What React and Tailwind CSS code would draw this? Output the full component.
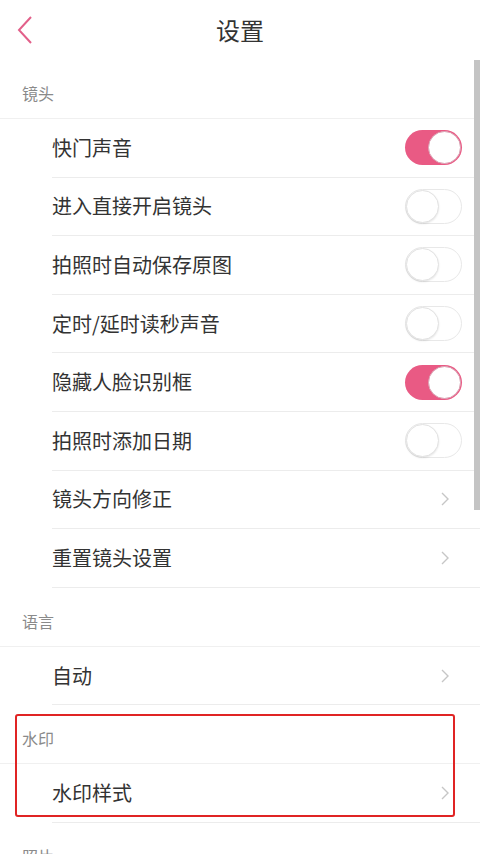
import React from 'react'

const font = { fontFamily: '"Noto Sans CJK SC", "Noto Sans", sans-serif' }

function Toggle({ on }) {
  return on ? (
    <div className="w-[57px] h-[35px] rounded-full bg-[#e95a84] flex items-center justify-end p-[1px]">
      <div className="w-[33px] h-[33px] rounded-full bg-white border border-[#d9a3b4]" />
    </div>
  ) : (
    <div className="w-[57px] h-[35px] rounded-full bg-white border border-[#e8e8e8] flex items-center justify-start">
      <div className="w-[33px] h-[33px] rounded-full bg-white border border-[#e2e2e2] shadow-[0_1px_2px_rgba(0,0,0,0.1)]" />
    </div>
  )
}

function Chevron() {
  return (
    <svg width="10" height="16" viewBox="0 0 10 16" className="mr-[30px]">
      <polyline points="2,2 8,8 2,14" fill="none" stroke="#c6c6c6" strokeWidth="1.4" />
    </svg>
  )
}

function Row({ label, toggle, on }) {
  return (
    <div className="h-[58.6px] pl-[52px]">
      <div className="h-full flex items-center justify-between border-b border-[#ececec]">
        <span className="text-[20px] text-[#333]">{label}</span>
        {toggle ? <div className="mr-[18px]"><Toggle on={on} /></div> : <Chevron />}
      </div>
    </div>
  )
}

function Section({ title, children }) {
  return (
    <div>
      <div className="h-[58px] pl-[22px] pt-[22px] text-[16px] leading-[22px] text-[#8a8a8a]">{title}</div>
      <div className="border-t border-[#f0f0f0]">{children}</div>
    </div>
  )
}

export default function App() {
  return (
    <div style={font} className="relative w-[480px] h-[854px] overflow-hidden bg-white">
      {/* Header */}
      <div className="relative h-[60px] flex items-center justify-center">
        <svg width="18" height="30" viewBox="0 0 18 30" className="absolute left-[16px] top-[15px]">
          <polyline points="15,2 3,15 15,28" fill="none" stroke="#e2608a" strokeWidth="2" />
        </svg>
        <span className="text-[24px] text-[#333]">设置</span>
      </div>

      <Section title="镜头">
        <Row label="快门声音" toggle on />
        <Row label="进入直接开启镜头" toggle />
        <Row label="拍照时自动保存原图" toggle />
        <Row label="定时/延时读秒声音" toggle />
        <Row label="隐藏人脸识别框" toggle on />
        <Row label="拍照时添加日期" toggle />
        <Row label="镜头方向修正" />
        <Row label="重置镜头设置" />
      </Section>

      <Section title="语言">
        <Row label="自动" />
      </Section>

      <Section title="水印">
        <Row label="水印样式" />
      </Section>

      <Section title="照片">
        <Row label="" />
      </Section>

      {/* scrollbar */}
      <div className="absolute right-0 top-[60px] w-[6px] h-[450px] bg-[#c4c4c4]" />

      {/* annotation box */}
      <div className="absolute left-[15px] top-[714px] w-[440px] h-[103px] border-2 border-[#e02424] rounded-[3px]" />
    </div>
  )
}
